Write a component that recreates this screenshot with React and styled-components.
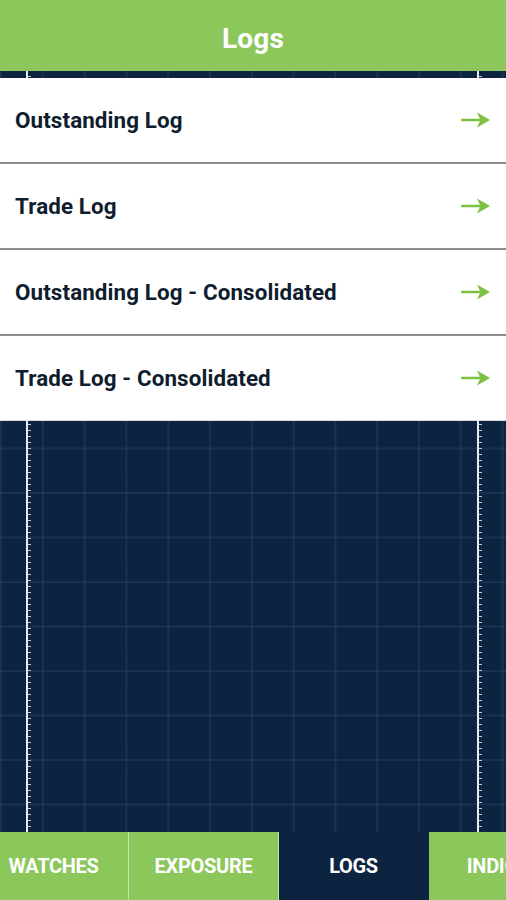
import React from "react";
import styled, { createGlobalStyle } from "styled-components";

const GlobalStyle = createGlobalStyle`
  html, body { margin: 0; padding: 0; }
  body {
    width: 506px;
    height: 900px;
    overflow: hidden;
    font-family: Roboto, "Liberation Sans", Arial, sans-serif;
    background: #0c2440;
  }
`;

const GREEN = "#8bc75b";
const NAVY = "#0c2440";

const Screen = styled.div`
  position: relative;
  width: 506px;
  height: 900px;
  display: flex;
  flex-direction: column;
  overflow: hidden;
  background-color: ${NAVY};
  background-image:
    linear-gradient(to right, rgba(120, 150, 185, 0.12) 2px, transparent 2px),
    linear-gradient(to bottom, rgba(120, 150, 185, 0.12) 2px, transparent 2px);
  background-size: 41.8px 44.5px;
  background-position: 0px 47px;
`;

const Axis = styled.div`
  position: absolute;
  top: 71px;
  bottom: 68px;
  left: ${(p) => p.$x}px;
  width: 6px;
  background-image:
    linear-gradient(to right, #e6ecf2 2px, transparent 2px),
    repeating-linear-gradient(to bottom, transparent 0 5px, #b9c5d2 5px 6px);
  background-size: 100% 100%, 5px 100%;
  background-repeat: no-repeat;
  z-index: 0;
`;

const Header = styled.header`
  position: relative;
  z-index: 1;
  height: 71px;
  flex: none;
  background: ${GREEN};
  display: flex;
  align-items: center;
  justify-content: center;
`;

const Title = styled.h1`
  margin: 0;
  color: #fff;
  font-size: 28px;
  font-weight: 700;
  letter-spacing: 0.2px;
  padding-top: 6px;
`;

const List = styled.ul`
  position: relative;
  z-index: 1;
  list-style: none;
  margin: 7px 0 0;
  padding: 0;
  display: flex;
  flex-direction: column;
  gap: 2px;
  background: #8a8c8f;
  border-bottom: 1px solid #d9dde3;
`;

const Row = styled.li`
  height: 84px;
  background: #fff;
  display: flex;
  align-items: center;
  justify-content: space-between;
  padding: 0 15px 0 15px;
`;

const RowLabel = styled.span`
  color: #0f1d2e;
  font-size: 22.4px;
  font-weight: 700;
  letter-spacing: 0.1px;
`;

const Spacer = styled.div`
  flex: 1;
`;

const TabBar = styled.nav`
  position: relative;
  z-index: 1;
  height: 68px;
  flex: none;
  overflow: hidden;
  display: flex;
`;

const TabTrack = styled.div`
  display: flex;
  margin-left: -21px;
`;

const Tab = styled.div`
  flex: none;
  width: 150px;
  box-sizing: border-box;
  display: flex;
  align-items: center;
  justify-content: center;
  background: ${(p) => (p.$active ? NAVY : GREEN)};
  border-right: 1px solid ${(p) => (p.$active ? NAVY : "#c4e3ab")};
  color: #fff;
  font-size: 20px;
  font-weight: 700;
  text-transform: uppercase;
  letter-spacing: -0.3px;
`;

const Arrow = () => (
  <svg width="30" height="18" viewBox="0 0 30 18" aria-hidden="true">
    <path d="M1 9 H20" stroke="#7cc142" strokeWidth="2.4" strokeLinecap="round" />
    <path d="M16 1.5 L29 9 L16 16.5 L19.5 9 Z" fill="#7cc142" />
  </svg>
);

const rows = [
  "Outstanding Log",
  "Trade Log",
  "Outstanding Log - Consolidated",
  "Trade Log - Consolidated",
];

const tabs = ["Watches", "Exposure", "Logs", "Indices"];

export default function App() {
  return (
    <>
      <GlobalStyle />
      <Screen>
        <Axis $x={26} />
        <Axis $x={477} />
        <Header>
          <Title>Logs</Title>
        </Header>
        <List>
          {rows.map((r) => (
            <Row key={r}>
              <RowLabel>{r}</RowLabel>
              <Arrow />
            </Row>
          ))}
        </List>
        <Spacer />
        <TabBar>
          <TabTrack>
            {tabs.map((t) => (
              <Tab key={t} $active={t === "Logs"}>
                {t}
              </Tab>
            ))}
          </TabTrack>
        </TabBar>
      </Screen>
    </>
  );
}
